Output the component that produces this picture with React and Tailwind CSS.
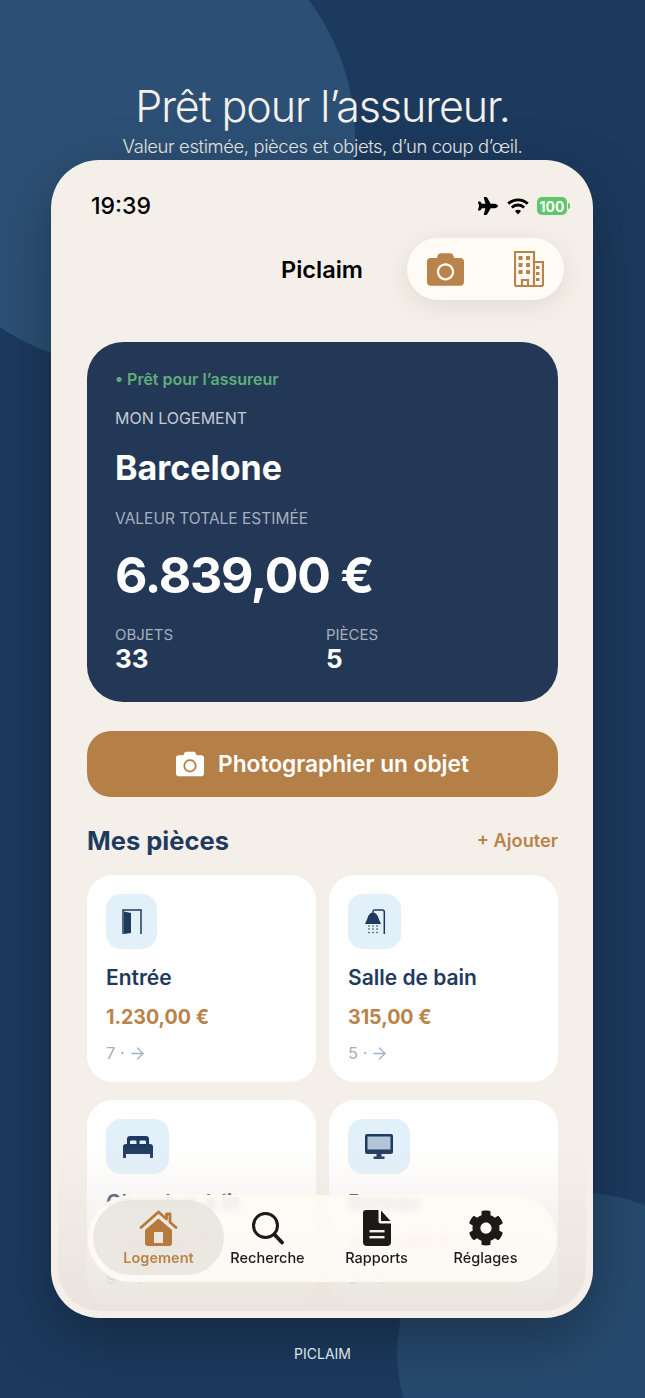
import React from "react";
import { ArrowRight } from "lucide-react";
import { FaCamera, FaCog, FaPlane } from "react-icons/fa";

const CameraIcon = ({ className }) => <FaCamera className={className} />;

const BuildingIcon = () => (
  <svg width="30" height="36" viewBox="0 0 30 36" fill="none" stroke="#b98349" strokeWidth="2.200">
    <path d="M1 35V1h19v34M20 11h9v24M1 35h28" />
    <path d="M8 35v-6h6v6" />
    <g fill="#b98349" stroke="none">
      <rect x="4.500" y="5" width="4" height="4" />
      <rect x="12" y="5" width="4" height="4" />
      <rect x="4.500" y="12" width="4" height="4" />
      <rect x="12" y="12" width="4" height="4" />
      <rect x="4.500" y="19" width="4" height="4" />
      <rect x="12" y="19" width="4" height="4" />
      <rect x="22" y="15" width="3.500" height="3" />
      <rect x="22" y="21" width="3.500" height="3" />
      <rect x="22" y="27" width="3.500" height="3" />
    </g>
  </svg>
);

const WifiIcon = () => (
  <svg width="22" height="17" viewBox="0 0 21 16" fill="none" stroke="#000" strokeWidth="2.800">
    <path d="M1.200 5.400a13.400 13.400 0 0 1 18.600 0" />
    <path d="M4.600 8.900a8.600 8.600 0 0 1 11.800 0" />
    <path d="M10.500 15.600 7.600 12.400a4.200 4.200 0 0 1 5.800 0z" fill="#000" stroke="none" />
  </svg>
);

const DoorIcon = () => (
  <svg width="20" height="26" viewBox="0 0 20 26" fill="none" stroke="#1f3a5f" strokeWidth="1.500">
    <path d="M1 25V1h18v24" />
    <path d="M2 2.500 9 4v20l-7 1z" fill="#1f3a5f" stroke="none" />
  </svg>
);

const ShowerIcon = () => (
  <svg width="22" height="26" viewBox="0 0 22 26" fill="none">
    <path d="M9 3V2.500A1.700 1.700 0 0 1 10.700 1h7.600A2 2 0 0 1 20.300 3v22" stroke="#1f3a5f" strokeWidth="1.500" />
    <path d="M9 3C6 4 4 6.500 3.400 9.500L1 15h16l-2.400-5.500C14 6.500 12 4 9 3z" fill="#1f3a5f" />
    <g fill="#1f3a5f">
      {[4, 8, 12].map((x) =>
        [17, 20, 23.500].map((y) => <circle key={`${x}-${y}`} cx={x + 1} cy={y} r="0.800" />)
      )}
    </g>
  </svg>
);

const BedIcon = () => (
  <svg width="30" height="22" viewBox="0 0 30 22" fill="#1f3a5f">
    <path d="M4 8V3a3 3 0 0 1 3-3h16a3 3 0 0 1 3 3v5h-3V5.500a1 1 0 0 0-1-1h-4.500a1 1 0 0 0-1 1V8h-3V5.500a1 1 0 0 0-1-1H8a1 1 0 0 0-1 1V8z" />
    <path d="M3 8h24a3 3 0 0 1 3 3v7H0v-7a3 3 0 0 1 3-3z" />
    <path d="M0 17h3v4a1.500 1.500 0 0 1-3 0zM27 17h3v4a1.500 1.500 0 0 1-3 0z" />
  </svg>
);

const MonitorIcon = () => (
  <svg width="28" height="25" viewBox="0 0 28 25">
    <rect x="0" y="0" width="28" height="20" rx="2" fill="#1f3a5f" />
    <rect x="2.500" y="2.500" width="23" height="13" fill="#b3c4d6" />
    <path d="M11.500 20h5v2.500h3V25h-11v-2.500h3z" fill="#1f3a5f" />
  </svg>
);

const HomeTabIcon = () => (
  <svg width="39" height="36" viewBox="0 0 39 36" fill="none">
    <path d="M2 17.500 19.500 2l8 7V4h3.500v8.200l6 5.300" stroke="#b57a3c" strokeWidth="2.800" strokeLinecap="round" strokeLinejoin="round" />
    <path fillRule="evenodd" d="M19.500 8.500 33 20v13a3 3 0 0 1-3 3H9a3 3 0 0 1-3-3V20zM15 22v11h9V22z" fill="#b57a3c" />
  </svg>
);

const SearchTabIcon = () => (
  <svg width="32" height="33" viewBox="0 0 32 33" fill="none" stroke="#1c1a17" strokeWidth="3">
    <circle cx="13.500" cy="13.500" r="12" />
    <path d="M22.500 22.500 30 30.500" strokeLinecap="round" strokeWidth="3.800" />
  </svg>
);

const ReportTabIcon = () => (
  <svg width="28" height="36" viewBox="0 0 28 36">
    <path d="M3 0h12.500v11.500a2 2 0 0 0 2 2H28V32a4 4 0 0 1-4 4H4a4 4 0 0 1-4-4V3a3 3 0 0 1 3-3z" fill="#1c1a17" />
    <path d="M18 0.500 27.500 11H18z" fill="#1c1a17" />
    <rect x="6.500" y="20" width="15" height="2.400" fill="#f6f1e8" />
    <rect x="6.500" y="26" width="15" height="2.400" fill="#f6f1e8" />
  </svg>
);

const rooms = [
  { name: "Entrée", price: "1.230,00 €", count: 7, icon: <DoorIcon />, box: "w-[51px]" },
  { name: "Salle de bain", price: "315,00 €", count: 5, icon: <ShowerIcon />, box: "w-[53px]" },
  { name: "Chambre à lit", price: "1.000,00 €", count: 9, icon: <BedIcon />, box: "w-[63px]" },
  { name: "Bureau", price: "4.100,00 €", count: 8, icon: <MonitorIcon />, box: "w-[62px]" },
];

const RoomCard = ({ room }) => (
  <div className="h-[207px] rounded-[26px] bg-white px-[19px] pt-[19px]">
    <div className={`flex h-[55px] items-center justify-center rounded-[15px] bg-[#e2f0fa] ${room.box}`}>
      {room.icon}
    </div>
    <p className="mt-[15px] text-[21px] leading-[28px] font-semibold text-[#1f3a5f]">{room.name}</p>
    <p className="mt-[11px] text-[19.600px] leading-[28px] font-bold text-[#b98349]">{room.price}</p>
    <div className="mt-[11px] flex items-center gap-[3px] text-[16.500px] leading-[22px] text-[#a3b0c2]">
      <span>{room.count} ·</span>
      <ArrowRight size={19} strokeWidth={1.600} />
    </div>
  </div>
);

const tabs = [
  { label: "Logement", icon: <HomeTabIcon />, active: true },
  { label: "Recherche", icon: <SearchTabIcon /> },
  { label: "Rapports", icon: <ReportTabIcon /> },
  { label: "Réglages", icon: <FaCog className="text-[36px] text-[#1c1a17]" /> },
];

export default function App() {
  return (
    <div className="relative flex h-[1398px] w-[645px] flex-col items-center overflow-hidden bg-[#1c3a5e] pt-[80px] font-['Inter',sans-serif]">
      {/* background blobs */}
      <div className="absolute top-[-90px] left-[-101px] h-[456px] w-[456px] rounded-full bg-[#2c5075]" />
      <div className="absolute top-[1193px] left-[397px] h-[320px] w-[346px] rounded-full bg-[#264a6e]" />

      <h1 className="relative text-[43px] leading-[52px] font-light tracking-[-0.025em] text-[#f6f1e8]">
        Prêt pour l’assureur.
      </h1>
      <p className="relative mt-[2px] text-[18.400px] leading-[24px] font-light tracking-[-0.02em] text-[#eceae4]">
        Valeur estimée, pièces et objets, d’un coup d’œil.
      </p>

      <div className="relative mt-[2px] -ml-[1px] h-[1158px] w-[542px] shrink-0 overflow-hidden rounded-[48px] bg-[#f4f0e9] shadow-[0_20px_60px_rgba(0,0,0,0.3)]">
        {/* status bar */}
        <div className="mt-[31px] flex h-[30px] items-center justify-between pr-[23px] pl-[40px]">
          <span className="text-[23px] font-medium text-black">19:39</span>
          <div className="flex items-center">
            <FaPlane className="mr-[9px] text-[20px] text-black" />
            <WifiIcon />
            <div className="ml-[8px] flex h-[18px] w-[30px] items-center justify-center rounded-[5px] bg-[#5fc66b] text-[14px] font-bold text-white">
              100
            </div>
            <div className="ml-[1px] h-[6px] w-[2px] rounded-r bg-[#5fc66b]" />
          </div>
        </div>

        {/* header */}
        <div className="mt-[17px] grid grid-cols-[1fr_auto_1fr] items-center px-[29px]">
          <div />
          <span className="pt-[1px] text-[23.500px] font-semibold text-black">Piclaim</span>
          <div className="flex h-[62px] w-[157px] items-center justify-between justify-self-end rounded-full bg-[#fefbf5] px-[20px] shadow-[0_6px_24px_rgba(60,50,30,0.1)]">
            <CameraIcon className="text-[37px] text-[#b98349]" />
            <BuildingIcon />
          </div>
        </div>

        <div className="mt-[42px] pr-[35px] pl-[36px]">
          {/* hero card */}
          <div className="h-[360px] rounded-[36px] bg-[#233857] pt-[25px] pl-[28px]">
            <p className="text-[16px] leading-[24px] font-semibold text-[#5fae7a]">• Prêt pour l’assureur</p>
            <p className="mt-[15px] text-[16px] leading-[24px] text-[#c6cbd3]">MON LOGEMENT</p>
            <p className="mt-[17px] text-[34px] leading-[42px] font-bold text-white">Barcelone</p>
            <p className="mt-[18px] text-[15.500px] leading-[24px] text-[#a6afbd]">VALEUR TOTALE ESTIMÉE</p>
            <p className="mt-[14px] text-[50px] leading-[60px] font-bold tracking-[-0.025em] text-white">6.839,00 €</p>
            <div className="mt-[20px] flex">
              <div className="w-[211px]">
                <p className="text-[15px] leading-[20px] text-[#a6afbd]">OBJETS</p>
                <p className="text-[26px] leading-[28px] font-bold text-white">33</p>
              </div>
              <div>
                <p className="text-[15px] leading-[20px] text-[#a6afbd]">PIÈCES</p>
                <p className="text-[26px] leading-[28px] font-bold text-white">5</p>
              </div>
            </div>
          </div>

          {/* main action */}
          <div className="mt-[29px] flex h-[66px] items-center justify-center gap-[14px] rounded-[24px] bg-[#b58048] text-white">
            <CameraIcon className="text-[28px]" />
            <span className="text-[22.700px] font-semibold">Photographier un objet</span>
          </div>

          <div className="mt-[27px] flex h-[34px] items-center justify-between">
            <h2 className="text-[25.500px] font-bold text-[#1f3a5f]">Mes pièces</h2>
            <span className="text-[18.200px] font-semibold text-[#b98349]">+ Ajouter</span>
          </div>

          <div className="mt-[17px] grid grid-cols-2 gap-x-[13px] gap-y-[18px]">
            {rooms.map((room) => (
              <RoomCard key={room.name} room={room} />
            ))}
          </div>
        </div>

        {/* fade under the tab bar */}
        <div className="absolute right-[7px] bottom-[7px] left-[7px] h-[165px] rounded-b-[42px] bg-gradient-to-b from-transparent to-[#e9e5de]" />

        {/* tab bar */}
        <div className="absolute top-[1035px] left-[37px] flex h-[87px] w-[469px] items-center rounded-full border-2 border-[#fff9ee] bg-[#fffcf7]/85 pl-[14px] backdrop-blur-[3px]">
          {tabs.map((tab) => (
            <div key={tab.label} className="relative flex h-full w-[109px] flex-col items-center">
              {tab.active && (
                <div className="absolute top-[3px] -right-[11px] -left-[11px] h-[75px] rounded-full bg-[#e6e3dc]/80" />
              )}
              <div className="relative mt-[13px] flex h-[36px] items-center justify-center">{tab.icon}</div>
              <span
                className={`relative mt-[2px] text-[14.500px] leading-[20px] ${
                  tab.active ? "font-semibold text-[#b98349]" : "font-medium text-[#1c1a17]"
                }`}
              >
                {tab.label}
              </span>
            </div>
          ))}
        </div>
      </div>

      <p className="relative mt-[26px] text-[14px] leading-[20px] text-[#dfe3e8]">PICLAIM</p>
    </div>
  );
}
